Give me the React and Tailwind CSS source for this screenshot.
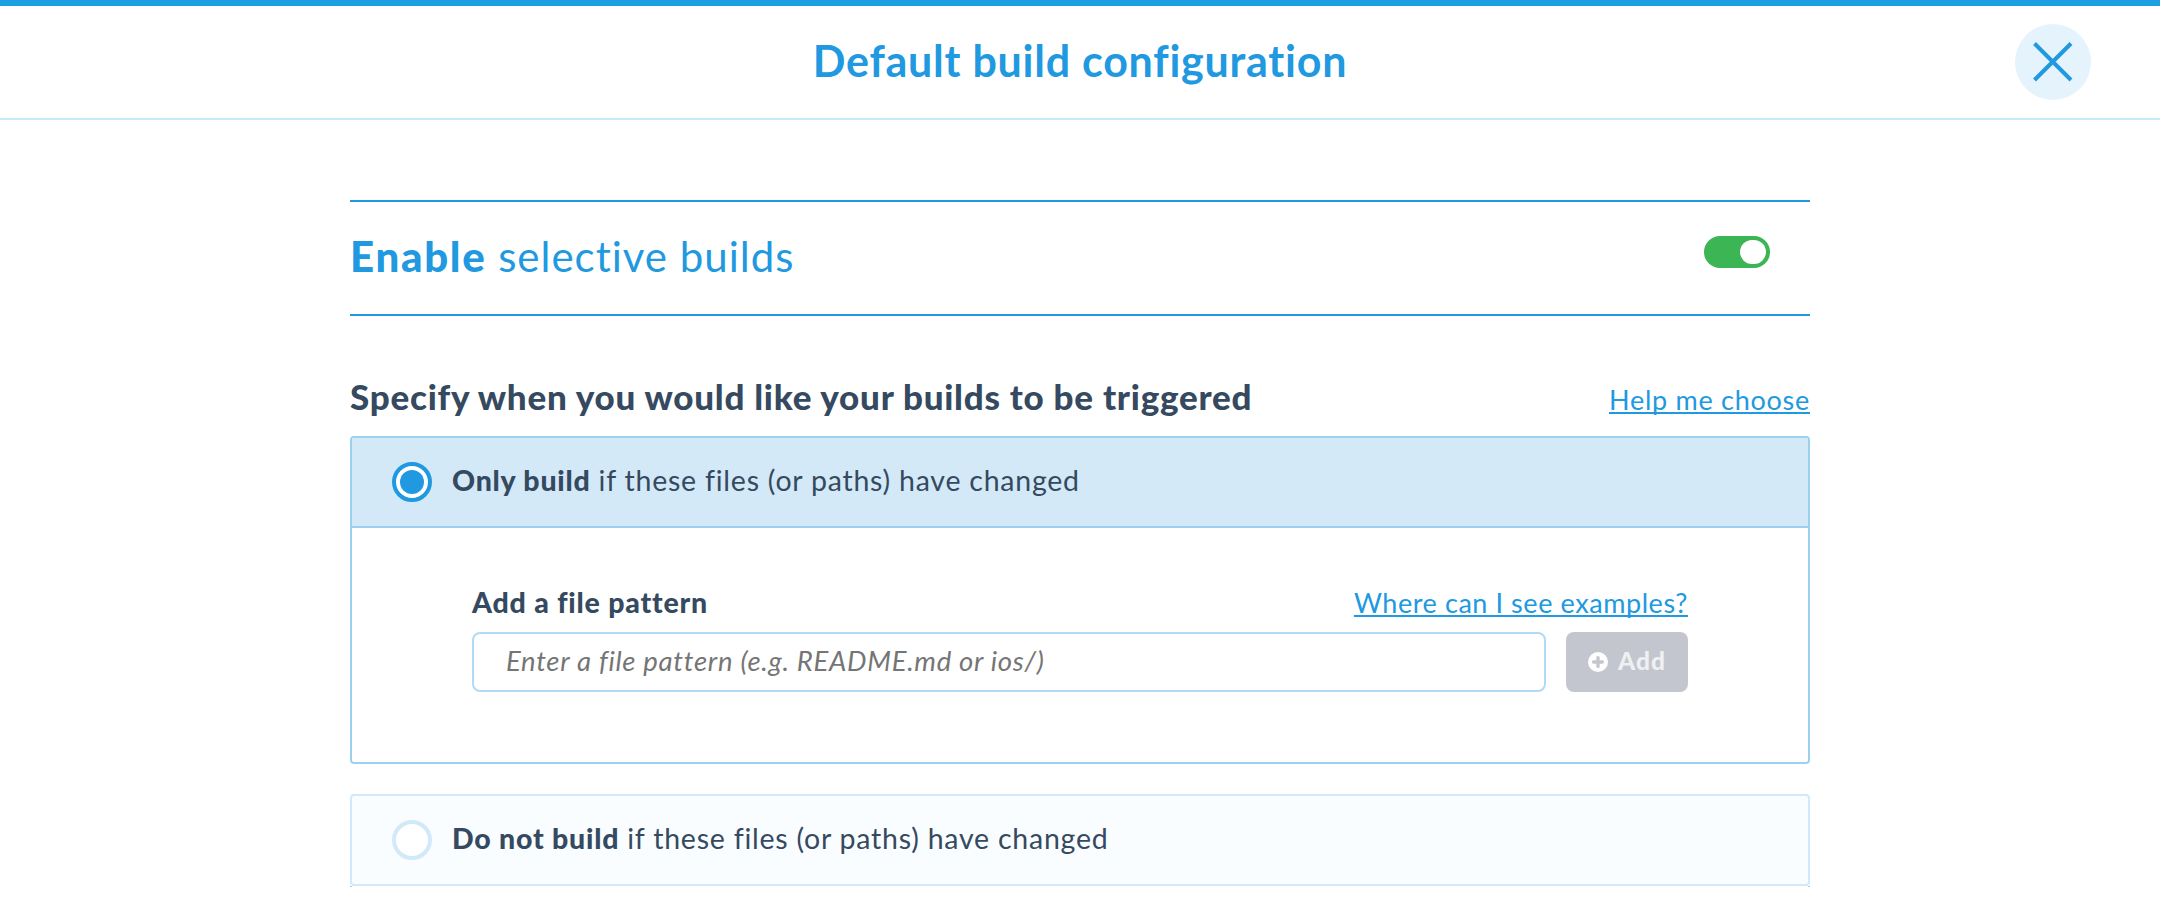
function CloseIcon() {
  return (
    <svg width="40" height="40" viewBox="0 0 40 40" fill="none" stroke="#2199e0" strokeWidth="4" className="block">
      <path d="M1.5 1.5 38 38M38 1.5 1.5 38" />
    </svg>
  );
}

function PlusCircle() {
  return (
    <svg width="20" height="20" viewBox="0 0 20 20" className="block shrink-0">
      <circle cx="10" cy="10" r="10" fill="#ffffff" />
      <path d="M10 5.6v8.8M5.6 10h8.8" stroke="#c3c6ce" strokeWidth="3.4" strokeLinecap="round" />
    </svg>
  );
}

function Radio({ checked }) {
  return checked ? (
    <span className="flex size-10 shrink-0 items-center justify-center rounded-full border-4 border-[#2199e0] bg-white">
      <span className="size-6 rounded-full bg-[#2199e0]" />
    </span>
  ) : (
    <span className="size-10 shrink-0 rounded-full border-4 border-[#d2e9f9] bg-white" />
  );
}

function OptionLabel({ strong }) {
  return (
    <span className="ml-5 pb-1 text-[28.5px] leading-10 tracking-[0.77px] whitespace-nowrap text-[#354a60]">
      <b className="font-black">{strong}</b> if these files (or paths) have changed
    </span>
  );
}

function Link({ children, className }) {
  return (
    <a
      href="#"
      className={
        'text-[27px] leading-10 whitespace-nowrap text-[#2199e0] underline decoration-2 underline-offset-[2px] [text-decoration-skip-ink:none] ' +
        className
      }
    >
      {children}
    </a>
  );
}

export default function App() {
  return (
    <div className="h-[900px] w-full overflow-hidden bg-white font-['Lato','Open_Sans',sans-serif]">
      <header className="grid h-[120px] grid-cols-[1fr_auto_1fr] items-center border-t-[6px] border-b-2 border-t-[#1c9fe3] border-b-[#c7e9f8] pr-[69px]">
        <span />
        <h1 className="pb-[3px] pl-[69px] text-[43px] leading-[52px] font-bold tracking-[0.75px] whitespace-nowrap text-[#2199e0]">
          Default build configuration
        </h1>
        <button className="flex size-[76px] items-center justify-center justify-self-end rounded-full bg-[#e4f3fc]" aria-label="Close">
          <CloseIcon />
        </button>
      </header>

      <main className="mx-auto mt-20 w-[1460px]">
        <section className="flex h-[116px] items-center justify-between border-y-2 border-[#2199e0] pr-10">
          <h2 className="pb-[5px] text-[42px] leading-[50px] whitespace-nowrap text-[#2199e0]">
            <b className="font-black tracking-[1.7px]">Enable</b>
            <span className="tracking-[1px]"> selective builds</span>
          </h2>
          <button className="mb-3 flex h-8 w-[66px] items-center justify-end rounded-full bg-[#3cb555] pr-1" aria-label="Selective builds">
            <span className="h-6 w-[26px] rounded-full bg-white" />
          </button>
        </section>

        <div className="flex h-[120px] items-baseline justify-between pt-[60px]">
          <h3 className="text-[35px] leading-10 font-black tracking-[0.75px] whitespace-nowrap text-[#354a60]">
            Specify when you would like your builds to be triggered
          </h3>
          <Link className="tracking-[0.73px]">Help me choose</Link>
        </div>

        <section className="h-[328px] overflow-hidden rounded border-2 border-[#9bd0f0] bg-white">
          <label className="flex h-[90px] items-center border-b-2 border-[#9bd0f0] bg-[#d3e9f7] pl-10">
            <Radio checked />
            <OptionLabel strong="Only build" />
          </label>
          <div className="px-[120px] pt-[54px]">
            <div className="mb-[10px] flex h-10 items-baseline justify-between">
              <span className="text-[28.5px] leading-10 font-black tracking-[0.8px] whitespace-nowrap text-[#354a60]">Add a file pattern</span>
              <Link className="tracking-[0.57px]">Where can I see examples?</Link>
            </div>
            <div className="flex gap-5">
              <input
                className="h-[60px] min-w-0 flex-1 rounded-lg border-2 border-[#b2daf5] bg-white px-8 pb-[3px] text-[27.5px] tracking-[0.71px] italic placeholder:text-[#757575]"
                placeholder="Enter a file pattern (e.g. README.md or ios/)"
              />
              <button className="flex h-[60px] w-[122px] items-center gap-[10px] rounded-lg bg-[#c3c6ce] pl-[22px]">
                <PlusCircle />
                <span className="pb-[3px] text-[24.5px] leading-8 font-black tracking-[1px] text-[#eff0f2]">Add</span>
              </button>
            </div>
          </div>
        </section>

        <section className="mt-[30px] flex h-[92px] items-center rounded border-2 border-[#d2e9f9] bg-[#f9fdff] pl-10">
          <Radio />
          <OptionLabel strong="Do not build" />
        </section>
        <div className="flex h-px justify-between">
          <span className="w-[2px] bg-[#9bd0f0]" />
          <span className="w-[2px] bg-[#9bd0f0]" />
        </div>
      </main>
    </div>
  );
}
